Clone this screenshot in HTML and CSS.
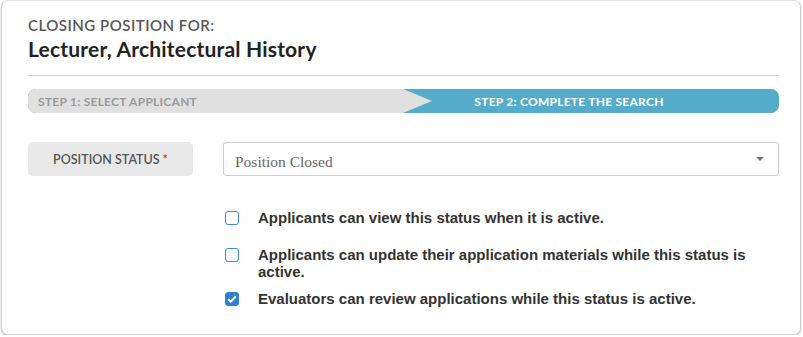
FILE: index.html
```html
<!DOCTYPE html>
<html lang="en">
<head>
  <meta charset="UTF-8">
  <title>Closing Position</title>
  <link rel="stylesheet" href="styles.css">
</head>
<body>
  <div class="card">
    <div class="eyebrow">Closing position for:</div>
    <h1 class="title">Lecturer, Architectural History</h1>
    <hr class="divider">

    <div class="steps">
      <div class="step step-done">Step 1: Select applicant</div>
      <div class="step step-active">Step 2: Complete the search</div>
    </div>

    <div class="field-row">
      <div class="field-label">Position status <span class="req">*</span></div>
      <div class="select">
        <span>Position Closed</span>
        <span class="caret"></span>
      </div>
    </div>

    <div class="options">
      <label class="option">
        <span class="box"></span>
        <span>Applicants can view this status when it is active.</span>
      </label>
      <label class="option">
        <span class="box"></span>
        <span>Applicants can update their application materials while this status is active.</span>
      </label>
      <label class="option">
        <span class="box checked">
          <svg width="10" height="8" viewBox="0 0 10 8"><path d="M1.2 4.2 L3.8 6.6 L8.8 1.4" fill="none" stroke="#fff" stroke-width="2"/></svg>
        </span>
        <span>Evaluators can review applications while this status is active.</span>
      </label>
    </div>
  </div>
</body>
</html>
```

FILE: styles.css
```css
body {
  margin: 0;
  background: #fff;
  font-family: Lato, "Open Sans", sans-serif;
}

.card {
  box-sizing: border-box;
  width: 800px;
  height: 335px;
  margin-left: 1px;
  border: 1px solid #cfcfcf;
  border-top-color: #e4e4e4;
  border-radius: 7px;
  box-shadow: 0 1px 2px rgba(0, 0, 0, 0.25);
  padding: 15px 21px 0 26px;
}

.eyebrow {
  font-size: 15px;
  line-height: 18px;
  letter-spacing: 0.5px;
  color: #555;
  text-transform: uppercase;
  font-weight: 600;
}

.title {
  margin: 3px 0 0;
  font-size: 21px;
  line-height: 24px;
  letter-spacing: 0.2px;
  font-weight: 700;
  color: #222;
}

.divider {
  margin: 14px 0 0;
  border: 0;
  border-top: 1px solid #cfcfcf;
}

.steps {
  display: flex;
  height: 24px;
  margin-top: 13px;
  border-radius: 8px;
  overflow: hidden;
  background: #54acca;
  font-size: 12px;
  font-weight: 700;
  letter-spacing: 0.25px;
  text-transform: uppercase;
}

.step {
  display: flex;
  align-items: center;
}

.step-done {
  position: relative;
  box-sizing: border-box;
  width: 375px;
  padding-left: 10px;
  background: #e0e0e0;
  color: #9a9a9a;
}

.step-done::after {
  content: "";
  position: absolute;
  right: -29px;
  top: 0;
  border-top: 12px solid transparent;
  border-bottom: 12px solid transparent;
  border-left: 29px solid #e0e0e0;
}

.step-active {
  flex: 1;
  justify-content: center;
  padding-right: 44px;
  color: #fff;
}

.field-row {
  display: flex;
  gap: 30px;
  margin-top: 29px;
}

.field-label {
  width: 165px;
  height: 34px;
  display: flex;
  align-items: center;
  justify-content: center;
  background: #e8e8e8;
  border-radius: 5px;
  font-size: 12.5px;
  font-weight: 600;
  color: #555;
  text-transform: uppercase;
}

.req {
  color: #c0392b;
  margin-left: 3px;
}

.select {
  flex: 1;
  height: 34px;
  box-sizing: border-box;
  display: flex;
  align-items: center;
  justify-content: space-between;
  padding: 5px 14px 0 11px;
  border: 1px solid #cccccc;
  border-radius: 3px;
  font-family: "Liberation Serif", serif;
  font-size: 15.5px;
  color: #666;
}

.caret {
  border-left: 4px solid transparent;
  border-right: 4px solid transparent;
  border-top: 4px solid #777;
  margin-top: -6px;
}

.options {
  margin: 33px 0 0 197px;
  display: flex;
  flex-direction: column;
  font-family: "Liberation Sans", Arial, sans-serif;
  font-size: 15px;
  font-weight: 700;
  line-height: 17px;
  color: #333;
}

.option {
  display: flex;
  align-items: flex-start;
  gap: 19px;
}

.option:nth-child(1) {
  margin-bottom: 20px;
}

.option:nth-child(2) {
  margin-bottom: 10px;
}

.box {
  flex: none;
  box-sizing: border-box;
  width: 14px;
  height: 14px;
  margin-top: 2px;
  border: 1.5px solid #3b8fd6;
  border-radius: 3px;
  display: flex;
  align-items: center;
  justify-content: center;
}

.box.checked {
  background: #2f80cf;
  border-color: #2f80cf;
}
```
